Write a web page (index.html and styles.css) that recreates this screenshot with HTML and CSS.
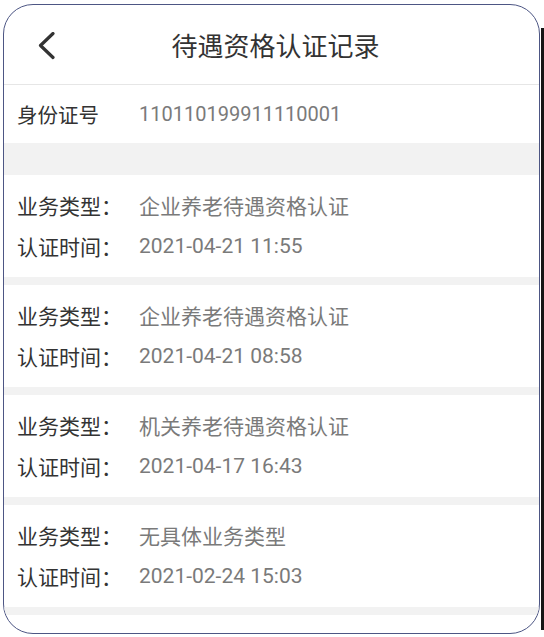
FILE: index.html
```html
<!DOCTYPE html>
<html lang="zh-CN">
<head>
<meta charset="utf-8">
<title>待遇资格认证记录</title>
<link rel="stylesheet" href="styles.css">
</head>
<body>
<div class="stage">
  <div class="phone">
    <header class="header">
      <div class="back">
        <svg width="18" height="28" viewBox="0 0 18 28" aria-hidden="true">
          <polyline points="15,1.5 2.5,13.5 15,25.5" fill="none" stroke="#333" stroke-width="3.2" stroke-linecap="round" stroke-linejoin="round"/>
        </svg>
      </div>
      <h1 class="title">待遇资格认证记录</h1>
      <div></div>
    </header>
    <div class="id-row">
      <span class="id-label">身份证号</span>
      <span class="id-value">110110199911110001</span>
    </div>
    <div class="band"></div>
    <div class="card">
      <div class="row"><span class="label">业务类型：</span><span class="value">企业养老待遇资格认证</span></div>
      <div class="row"><span class="label">认证时间：</span><span class="value">2021-04-21 11:55</span></div>
    </div>
    <div class="card">
      <div class="row"><span class="label">业务类型：</span><span class="value">企业养老待遇资格认证</span></div>
      <div class="row"><span class="label">认证时间：</span><span class="value">2021-04-21 08:58</span></div>
    </div>
    <div class="card">
      <div class="row"><span class="label">业务类型：</span><span class="value">机关养老待遇资格认证</span></div>
      <div class="row"><span class="label">认证时间：</span><span class="value">2021-04-17 16:43</span></div>
    </div>
    <div class="card">
      <div class="row"><span class="label">业务类型：</span><span class="value">无具体业务类型</span></div>
      <div class="row"><span class="label">认证时间：</span><span class="value">2021-02-24 15:03</span></div>
    </div>
  </div>
  <div class="edge"></div>
</div>
</body>
</html>
```
FILE: styles.css
```css
html, body {
  margin: 0;
  padding: 0;
  background: #ffffff;
}
body {
  font-family: Roboto, "Noto Sans CJK SC", "Noto Sans", sans-serif;
  color: #333333;
}
.stage {
  display: flex;
  align-items: flex-start;
  width: 544px;
  height: 637px;
}
.phone {
  box-sizing: border-box;
  margin: 4px 0 0 3px;
  width: 537px;
  height: 630px;
  border: 1.5px solid #4d5684;
  border-radius: 30px;
  overflow: hidden;
  background: #ffffff;
}
.edge {
  margin: 28px 0 0 1px;
  width: 3px;
  height: 602px;
  background: #161616;
}
.header {
  box-sizing: border-box;
  height: 80px;
  display: grid;
  grid-template-columns: 70px 1fr 70px;
  align-items: center;
  border-bottom: 1px solid #e6e6e6;
}
.back {
  display: flex;
  padding-left: 34px;
  padding-top: 2px;
}
.title {
  margin: 0;
  font-weight: 400;
  font-size: 26px;
  color: #333333;
  text-align: center;
  padding-left: 8px;
  padding-top: 0;
}
.id-row {
  height: 58px;
  display: flex;
  align-items: center;
  padding: 0 0 0 13px;
  box-sizing: border-box;
}
.id-label {
  width: 122px;
  font-size: 20.5px;
  color: #333333;
}
.id-value {
  font-size: 20px;
  color: #7a7a7a;
}
.band {
  height: 32px;
  background: #f2f2f2;
}
.card {
  box-sizing: border-box;
  height: 110px;
  padding: 9px 0 0 13px;
  border-bottom: 8px solid #f2f2f2;
}
.row {
  display: flex;
  align-items: center;
  height: 41px;
  font-size: 21px;
}
.label {
  width: 122px;
  color: #333333;
}
.value {
  color: #7a7a7a;
}
```
